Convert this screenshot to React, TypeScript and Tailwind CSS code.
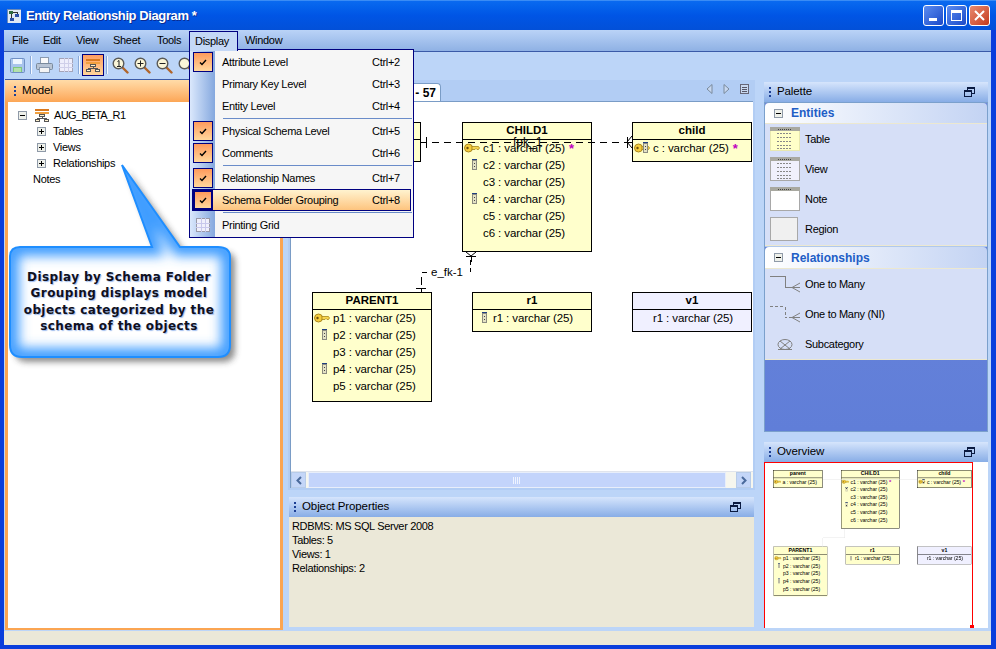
import React from "react";

const Grip = () => (
  <div className="flex flex-col gap-[2px] w-[3px] mr-[5px]">
    <div className="w-[2px] h-[2px] bg-[#1c3f94]" />
    <div className="w-[2px] h-[2px] bg-[#1c3f94]" />
    <div className="w-[2px] h-[2px] bg-[#1c3f94]" />
  </div>
);

const Restore = () => (
  <svg width="11" height="10" viewBox="0 0 11 10" className="shrink-0" shapeRendering="crispEdges">
    <path d="M3.5 3V.5h7v6H8" fill="none" stroke="#0a1a40" />
    <rect x="0.5" y="3.5" width="7" height="6" fill="none" stroke="#0a1a40" />
    <line x1="1" y1="4.5" x2="7" y2="4.5" stroke="#0a1a40" />
    <line x1="4" y1="1.5" x2="10" y2="1.5" stroke="#0a1a40" />
  </svg>
);

const PanelHeader = ({ title }: { title: string }) => (
  <div className="h-[20px] flex items-center pl-[5px] pr-[13px] pb-[1px] bg-gradient-to-b from-[#d6e5fc] to-[#88ade6] text-[11.5px] tracking-[-0.1px] text-black shrink-0">
    <Grip />
    <span className="flex-1">{title}</span>
    <Restore />
  </div>
);

const Key = ({ className = "" }: { className?: string }) => (
  <svg width="16" height="10" viewBox="0 0 16 10" className={className}>
    <ellipse cx="4.5" cy="5" rx="4" ry="4" fill="#f5cc3c" stroke="#a8861c" />
    <circle cx="3.5" cy="5" r="1.2" fill="#6e5210" />
    <path d="M8 3.5h6.5l1 1.5-1 1.5H13l-1-1-1 1H8z" fill="#f7d64e" stroke="#a8861c" strokeWidth="0.8" />
  </svg>
);

const ColIcon = ({ className = "" }: { className?: string }) => (
  <svg width="5" height="11" viewBox="0 0 5 11" className={className} shapeRendering="crispEdges">
    <rect x="0" y="0" width="5" height="2" fill="#1f3f7f" />
    <rect x="0.5" y="1.5" width="4" height="9" fill="#e4e2c4" stroke="#8a8a80" />
    <rect x="2" y="3.5" width="1" height="1" fill="#444" />
    <rect x="2" y="7" width="1" height="1" fill="#444" />
  </svg>
);

type Row = { t: string; icon?: "key" | "col" | "both"; star?: boolean };

const Entity = ({ name, x, y, w, rows, h, view }: { name: string; x: number; y: number; w: number; h: number; rows: Row[]; view?: boolean }) => (
  <div
    className={`absolute border border-black text-black ${view ? "bg-[#f0f0ff]" : "bg-[#ffffcc]"}`}
    style={{ left: x, top: y, width: w, height: h }}
  >
    <div className="h-[17px] border-b border-black flex items-center justify-center font-bold text-[11.5px] tracking-normal leading-none">{name}</div>
    {rows.map((r) => (
      <div key={r.t} className="relative h-[17px] pl-[20px] flex items-center text-[11.5px] tracking-[-0.1px] leading-none whitespace-nowrap">
        {(r.icon === "key" || r.icon === "both") && <Key className="absolute left-[1px] top-[3px]" />}
        {(r.icon === "col" || r.icon === "both") && <ColIcon className={`absolute top-[2px] ${r.icon === "both" ? "left-[10px]" : "left-[9px]"}`} />}
        <span>{r.t}</span>
        {r.star && <span className="ml-[4px] text-[#c000c0] text-[13px] font-bold leading-none">*</span>}
      </div>
    ))}
  </div>
);

const Diagram = ({ mini }: { mini?: boolean }) => (
  <>
    <svg width="460" height="180" className="absolute left-0 top-0 z-10" fill="none" stroke={mini ? "#e4e4e4" : "#000"} shapeRendering="crispEdges">
      {mini ? (
        <>
          <path d="M110 20H321" />
          <path d="M159 130V150H110V170" />
        </>
      ) : (
        <>
          <path d="M110 20H115" />
          <path d="M115 15V26" />
          <path d="M121 20H316" strokeDasharray="7 5" />
          <path d="M316 15V26" />
          <path d="M316 20H321" />
          <path d="M321 14L316 20L321 26" shapeRendering="auto" />
          <path d="M155 130L160 134L165 130" shapeRendering="auto" />
          <path d="M155 134H165" />
          <path d="M160 134V140" />
          <path d="M159 138V150" strokeDasharray="5 3" />
          <path d="M111 150H116" />
          <path d="M110 155V163" />
          <path d="M105 166H115" />
          <path d="M110 166V170" />
        </>
      )}
    </svg>
    {!mini && (
      <>
        <span className="absolute z-10 left-[202px] top-[13px] text-[12px] tracking-normal leading-[14px] text-black">fpk_1</span>
        <span className="absolute z-10 left-[120px] top-[143px] text-[11.5px] tracking-normal leading-[14px] text-black whitespace-nowrap">e_fk-1</span>
      </>
    )}
    <Entity name="parent" x={0} y={0} w={110} h={40} rows={[{ t: "a : varchar (25)", icon: "key" }]} />
    <Entity
      name="CHILD1"
      x={151}
      y={0}
      w={130}
      h={130}
      rows={[
        { t: "c1 : varchar (25)", icon: "key", star: true },
        { t: "c2 : varchar (25)", icon: "col" },
        { t: "c3 : varchar (25)" },
        { t: "c4 : varchar (25)", icon: "col" },
        { t: "c5 : varchar (25)" },
        { t: "c6 : varchar (25)" },
      ]}
    />
    <Entity name="child" x={321} y={0} w={120} h={40} rows={[{ t: "c : varchar (25)", icon: "both", star: true }]} />
    <Entity
      name="PARENT1"
      x={1}
      y={170}
      w={120}
      h={110}
      rows={[
        { t: "p1 : varchar (25)", icon: "key" },
        { t: "p2 : varchar (25)", icon: "col" },
        { t: "p3 : varchar (25)" },
        { t: "p4 : varchar (25)", icon: "col" },
        { t: "p5 : varchar (25)" },
      ]}
    />
    <Entity name="r1" x={161} y={170} w={120} h={40} rows={[{ t: "r1 : varchar (25)", icon: "col" }]} />
    <Entity name="v1" x={321} y={170} w={120} h={40} view rows={[{ t: "r1 : varchar (25)" }]} />
  </>
);

const Lens = ({ mark }: { mark: "1" | "+" | "-" | "" }) => (
  <svg width="17" height="17" viewBox="0 0 17 17" className="shrink-0">
    <path d="M10 10l5.5 5.5" stroke="#b0652a" strokeWidth="2.4" strokeLinecap="round" />
    <circle cx="6.5" cy="6.5" r="5.3" fill="#fbf6d8" stroke="#5a5a58" strokeWidth="1.4" />
    {mark === "1" && <path d="M5.5 4.5l1.5-1v6M5 9.5h4" stroke="#222" fill="none" />}
    {mark === "+" && <path d="M3.5 6.5h6M6.5 3.5v6" stroke="#222" />}
    {mark === "-" && <path d="M3.5 6.5h6" stroke="#222" />}
  </svg>
);

const SchemaIcon = () => (
  <svg width="14" height="13" viewBox="0 0 14 13" className="shrink-0" shapeRendering="crispEdges">
    <rect x="0" y="0" width="14" height="2" fill="#d9791f" />
    <rect x="0" y="3" width="14" height="2" fill="#f0a040" />
    <rect x="4.5" y="5.5" width="5" height="2" fill="#fff2d0" stroke="#555" />
    <rect x="0.5" y="10.5" width="4" height="2" fill="#fff2d0" stroke="#555" />
    <rect x="9.5" y="10.5" width="4" height="2" fill="#fff2d0" stroke="#555" />
    <path d="M7.5 8v1.5M2.5 10V9.5h9V10" stroke="#555" fill="none" />
  </svg>
);

const ToolSep = ({ className = "" }: { className?: string }) => (
  <div className={`w-[2px] h-[18px] bg-[#f4f8ff] border-l border-[#88a8d8] shrink-0 ${className}`} />
);

const Expander = ({ minus }: { minus?: boolean }) => (
  <svg width="9" height="9" viewBox="0 0 9 9" className="shrink-0" shapeRendering="crispEdges">
    <rect x="0.5" y="0.5" width="8" height="8" fill="#eef0ea" stroke="#8f9aa8" />
    <path d={minus ? "M2 4.5h5" : "M2 4.5h5M4.5 2v5"} stroke="#000" />
  </svg>
);

const Check = ({ active }: { active?: boolean }) => (
  <div
    className={`w-[20px] h-[20px] flex items-center justify-center bg-gradient-to-b from-[#fe9a5c] to-[#ffd79c] shrink-0 ${
      active ? "border-2 border-[#000080]" : "border border-[#000080]"
    }`}
  >
    <svg width="8" height="7" viewBox="0 0 8 7">
      <path d="M1 3.5l2 2 4-4.5" fill="none" stroke="#000" strokeWidth="1.4" />
    </svg>
  </div>
);

type MI = { l: string; k: string; c?: boolean; hi?: boolean; grid?: boolean; sep?: boolean };

const menuItems: MI[] = [
  { l: "Attribute Level", k: "Ctrl+2", c: true },
  { l: "Primary Key Level", k: "Ctrl+3" },
  { l: "Entity Level", k: "Ctrl+4" },
  { l: "Physical Schema Level", k: "Ctrl+5", c: true, sep: true },
  { l: "Comments", k: "Ctrl+6", c: true },
  { l: "Relationship Names", k: "Ctrl+7", c: true, sep: true },
  { l: "Schema Folder Grouping", k: "Ctrl+8", c: true, hi: true },
  { l: "Printing Grid", k: "", grid: true, sep: true },
];

const Menu = () => (
  <div className="absolute z-30 left-[189px] top-[49px] w-[225px] h-[189px] border border-[#000080] bg-[#f6f6f6] text-black">
    <div className="absolute left-0 top-0 bottom-0 w-[25px] bg-gradient-to-r from-[#dbe8fc] to-[#85a8de]" />
    <div className="relative flex flex-col pt-[1px]">
      {menuItems.map((m) => (
        <React.Fragment key={m.l}>
          {m.sep && <div className="ml-[33px] mr-[1px] h-[1px] bg-[#6a8cc9] my-[1px]" />}
          <div className="relative flex items-center h-[22px]">
            {m.hi && (
              <div className="absolute left-[2px] right-[2px] top-0 bottom-0 border border-[#000080] bg-gradient-to-b from-[#fff3cf] to-[#fdc47e]" />
            )}
            <div className="relative w-[32px] pl-[3px] shrink-0 flex items-center">
              {m.c && <Check active={m.hi} />}
              {m.grid && (
                <svg width="14" height="14" viewBox="0 0 14 14" className="ml-[3px]" shapeRendering="crispEdges">
                  <rect x="0.5" y="0.5" width="13" height="13" fill="#f0f0fc" stroke="#9a9aa8" />
                  <path d="M0 5h14M0 9h14M5 0v14M9 0v14" stroke="#c8c8ec" />
                </svg>
              )}
            </div>
            <span className="relative flex-1 whitespace-nowrap pt-[1px]">{m.l}</span>
            <span className="relative w-[41px] whitespace-nowrap pt-[1px]">{m.k}</span>
          </div>
        </React.Fragment>
      ))}
    </div>
  </div>
);

const CALLOUT =
  "M122 165L152 247L20 247Q10 247 10 257L10 345Q10 357 22 357L218 357Q230 357 230 345L230 257Q230 247 218 247L180 247Z";

const Callout = () => (
  <>
    <svg width="250" height="220" viewBox="0 160 250 220" className="absolute z-20 left-0 top-[160px]">
      <defs>
        <filter id="b1" x="-20%" y="-20%" width="140%" height="140%">
          <feGaussianBlur stdDeviation="6" />
        </filter>
        <filter id="b2" x="-20%" y="-20%" width="140%" height="140%">
          <feGaussianBlur stdDeviation="3" />
        </filter>
        <clipPath id="cp">
          <path d={CALLOUT} />
        </clipPath>
      </defs>
      <path d={CALLOUT} fill="#333" opacity="0.55" transform="translate(5 5)" filter="url(#b2)" />
      <path d={CALLOUT} fill="#fff" />
      <g clipPath="url(#cp)">
        <path d={CALLOUT} fill="none" stroke="#3f9dff" strokeWidth="18" filter="url(#b1)" />
      </g>
      <path d={CALLOUT} fill="none" stroke="#1f8eff" strokeWidth="2" />
    </svg>
    <div className="absolute z-20 left-[9px] top-[269px] w-[220px] text-center font-['DejaVu_Sans',sans-serif] font-bold text-[12px] tracking-[0.4px] leading-[16.3px] text-[#101020] [text-shadow:1px_1px_1px_rgba(60,120,220,0.5)]">
      Display by Schema Folder
      <br />
      Grouping displays model
      <br />
      objects categorized by the
      <br />
      schema of the objects
    </div>
  </>
);

const Thumb = ({ kind }: { kind: "table" | "view" | "note" | "region" }) => {
  if (kind === "region")
    return <div className="w-[28px] h-[24px] border border-[#a8a8a8] bg-[#f0f0f0]" />;
  const bg = kind === "table" ? "#ffffc8" : kind === "view" ? "#f0f0fc" : "#ffffff";
  return (
    <svg width="30" height="24" viewBox="0 0 30 24" shapeRendering="crispEdges">
      <rect x="0.5" y="0.5" width="29" height="23" fill={bg} stroke={kind === "table" ? "#e8e8b0" : "#a8a8a8"} />
      <rect x="0" y="0" width="30" height="4" fill="#a8a8a0" />
      <path d="M8 2h14" stroke="#444" strokeDasharray="1 1" />
      {kind !== "note" &&
        [6, 10, 14, 18, 21].map((y) => (
          <path key={y} d={`M7 ${y + 0.5}h14`} stroke="#888" strokeDasharray="2 1" />
        ))}
    </svg>
  );
};

const SectionHead = ({ t, short }: { t: string; short?: boolean }) => (
  <div className={`${short ? "h-[21px]" : "h-[22px]"} flex items-center pl-[9px] rounded-t-[4px] bg-gradient-to-r from-[#ffffff] to-[#c3d3f3] border-b border-[#ece8d0]`}>
    <Expander minus />
    <span className="ml-[8px] font-bold text-[12px] tracking-normal text-[#215dc6]">{t}</span>
  </div>
);

const PItem = ({ icon, t }: { icon: React.ReactNode; t: string }) => (
  <div className="h-[30px] flex items-center text-black">
    <div className="w-[40px] pl-[5px] flex items-center shrink-0">{icon}</div>
    <span>{t}</span>
  </div>
);

const RelIcon = ({ dash }: { dash?: boolean }) => (
  <svg width="30" height="17" viewBox="0 0 30 17" fill="none" stroke="#808080" shapeRendering="crispEdges">
    <path d="M0 0.5H15V11.5H24" strokeDasharray={dash ? "3 2" : undefined} />
    <path d="M22 11.5L30 7M22 11.5H30M22 11.5L30 16" shapeRendering="auto" />
  </svg>
);

const SubIcon = () => (
  <svg width="30" height="11" viewBox="0 0 30 11" fill="none" stroke="#808080">
    <ellipse cx="15" cy="5.5" rx="7" ry="5" />
    <path d="M8 10.5h14" />
    <path d="M10 2l10 8M20 2L10 10" />
  </svg>
);

export default function App() {
  return (
    <div className="relative w-[996px] h-[649px] overflow-hidden flex flex-col bg-[#0a3edc] font-['Liberation_Sans',sans-serif] text-[11px] tracking-[-0.3px]">
      {/* Title bar */}
      <div className="h-[30px] shrink-0 flex items-center pl-[7px] pr-[6px] bg-gradient-to-b from-[#0a6af0] via-[#0055e5] to-[#0250d8] border-t border-[#3a8cf5]">
        <svg width="14" height="14" viewBox="0 0 14 14" className="shrink-0" shapeRendering="crispEdges">
          <rect width="14" height="14" fill="#dfe8f5" stroke="#6a8ab8" />
          <rect x="2" y="2" width="4" height="3" fill="#2d6a3e" />
          <rect x="8" y="5" width="4" height="3" fill="#2a4ea8" />
          <rect x="3" y="9" width="4" height="3" fill="#2a4ea8" />
          <path d="M4 5v4M6 3.5h4V5" stroke="#333" fill="none" />
        </svg>
        <span className="ml-[5px] flex-1 font-bold text-[13px] tracking-[-0.4px] text-white whitespace-nowrap [text-shadow:1px_1px_0_#0a2a90]">
          Entity Relationship Diagram *
        </span>
        <div className="flex gap-[2px]">
          <div className="w-[21px] h-[21px] rounded-[3px] border border-white bg-gradient-to-br from-[#5c8cf0] to-[#1c48c8] flex items-end pl-[5px] pb-[4px]">
            <div className="w-[8px] h-[3px] bg-white" />
          </div>
          <div className="w-[21px] h-[21px] rounded-[3px] border border-white bg-gradient-to-br from-[#5c8cf0] to-[#1c48c8] flex items-center justify-center">
            <div className="w-[11px] h-[11px] border border-white border-t-[3px]" />
          </div>
          <div className="w-[21px] h-[21px] rounded-[3px] border border-white bg-gradient-to-br from-[#e88a70] to-[#c43818] flex items-center justify-center">
            <svg width="11" height="11" viewBox="0 0 11 11">
              <path d="M1 1l9 9M10 1l-9 9" stroke="#fff" strokeWidth="2" />
            </svg>
          </div>
        </div>
      </div>

      <div className="flex-1 ml-[4px] mr-[5px] mb-[4px] flex flex-col bg-[#bcd5f8] min-h-0">
        {/* Menu bar */}
        <div className="h-[22px] shrink-0 flex items-start bg-gradient-to-b from-[#bad3f7] to-[#8fb1e4] border-b border-[#3a5aa8] text-black leading-[19px]">
          <div className="w-[32px] pl-[8px] h-[21px] pt-[1px]">File</div>
          <div className="w-[33px] pl-[7px] h-[21px] pt-[1px]">Edit</div>
          <div className="w-[37px] pl-[7px] h-[21px] pt-[1px]">View</div>
          <div className="w-[44px] pl-[7px] h-[21px] pt-[1px]">Sheet</div>
          <div className="w-[39px] pl-[7px] h-[21px] pt-[1px]">Tools</div>
          <div className="w-[49px] mt-[1px] h-[20px] pl-[5px] border border-[#000080] border-b-0 bg-[#c4d8f6] z-40 leading-[18px]">Display</div>
          <div className="pl-[7px] h-[21px] pt-[1px]">Window</div>
        </div>
        {/* Toolbar */}
        <div className="h-[26px] shrink-0 flex items-center pl-[6px] gap-[5px]">
          <svg width="15" height="15" viewBox="0 0 15 15" className="shrink-0">
            <rect x="0.5" y="0.5" width="14" height="14" rx="1" fill="#a8c4ec" stroke="#6f8fc4" />
            <rect x="3" y="1" width="9" height="5" fill="#eef6ff" />
            <rect x="3" y="9" width="9" height="5" fill="#7fc87a" />
            <path d="M4 11h7M4 13h7" stroke="#e8f8e0" />
          </svg>
          <ToolSep />
          <svg width="17" height="16" viewBox="0 0 17 16" className="shrink-0 -ml-[1px]">
            <rect x="4.5" y="0.5" width="8" height="6" fill="#fafafa" stroke="#8a9ab0" />
            <rect x="0.5" y="6.5" width="16" height="6" rx="1" fill="#b8c4d4" stroke="#7a8a9c" />
            <rect x="3.5" y="10.5" width="10" height="5" fill="#f4f4f4" stroke="#8a9ab0" />
          </svg>
          <svg width="14" height="14" viewBox="0 0 14 14" className="shrink-0 ml-[1px]" shapeRendering="crispEdges">
            <rect x="0.5" y="0.5" width="13" height="13" fill="#eeeefc" stroke="#a4a4b8" />
            <path d="M0 5h14M0 9h14M5 0v14M9 0v14" stroke="#cfcfea" />
          </svg>
          <ToolSep />
          <div className="w-[22px] h-[22px] shrink-0 -ml-[3px] border border-[#000080] bg-gradient-to-b from-[#fe9d60] to-[#ffd59a] flex items-center justify-center">
            <SchemaIcon />
          </div>
          <ToolSep className="-ml-[3px]" />
          <div className="flex gap-[5px] -ml-[1px]">
            <Lens mark="1" />
            <Lens mark="+" />
            <Lens mark="-" />
            <Lens mark="" />
          </div>
        </div>
        {/* Main */}
        <div className="flex-1 flex min-h-0">
          {/* Left */}
          <div className="ml-[1px] mt-[1px] w-[278px] flex flex-col border-x-[3px] border-b-[2px] border-[#fba552] bg-white shrink-0">
            <div className="-mx-[3px] h-[23px] shrink-0 flex items-center pl-[9px] border-t border-[#3a5aa8] bg-gradient-to-b from-[#ffdca8] to-[#fca655] text-[11.5px] tracking-[-0.1px] text-black">
              <Grip />
              <span>Model</span>
            </div>
            <div className="pt-[5px] pl-[10px] text-black">
              <div className="h-[16px] flex items-center">
                <Expander minus />
                <div className="ml-[8px] mr-[5px]">
                  <SchemaIcon />
                </div>
                <span className="tracking-[-0.6px]">AUG_BETA_R1</span>
              </div>
              {["Tables", "Views", "Relationships"].map((t) => (
                <div key={t} className="h-[16px] flex items-center pl-[19px]">
                  <Expander />
                  <span className="ml-[7px]">{t}</span>
                </div>
              ))}
              <div className="h-[16px] flex items-center pl-[15px]">Notes</div>
            </div>
          </div>
          {/* Center */}
          <div className="ml-[5px] w-[467px] shrink-0 flex flex-col pt-[2px]">
            <div className="h-[410px] shrink-0 flex flex-col bg-[#b2cdf4]">
              <div className="h-[21px] shrink-0 flex items-end relative">
                <div className="ml-[120px] w-[33px] h-[18px] bg-white rounded-tr-[4px] border-t border-r border-[#7a9cc6] flex items-center justify-end pr-[4px] font-bold text-[12px] tracking-normal text-black">
                  - 57
                </div>
                <div className="absolute right-[6px] top-[4px] flex items-center gap-[10px]">
                  <svg width="7" height="10" viewBox="0 0 7 10">
                    <path d="M6 .5L1 5l5 4.5z" fill="#c8d8f0" stroke="#7a8a9c" />
                  </svg>
                  <svg width="7" height="10" viewBox="0 0 7 10">
                    <path d="M1 .5L6 5 1 9.5z" fill="#c8d8f0" stroke="#7a8a9c" />
                  </svg>
                  <svg width="9" height="10" viewBox="0 0 9 10" shapeRendering="crispEdges">
                    <rect x="0.5" y="0.5" width="8" height="9" fill="#c8d8f0" stroke="#667" />
                    <path d="M2 3h5M2 5h5M2 7h5" stroke="#556" />
                  </svg>
                </div>
              </div>
              <div className="flex-1 mx-[2px] mb-[2px] flex flex-col border-l border-t border-[#7a9cc6] bg-white min-h-0">
                <div className="relative flex-1 overflow-hidden min-h-0">
                  <div className="absolute left-[20px] top-[20px]">
                    <Diagram />
                  </div>
                </div>
                <div className="h-[17px] shrink-0 flex items-stretch bg-[#f6f6ee] border-t border-[#e0e4ec]">
                  <div className="w-[15px] border border-[#b8cce8] bg-[#c4d6f8] flex items-center justify-center">
                    <svg width="6" height="9" viewBox="0 0 6 9">
                      <path d="M5 1L1.5 4.5 5 8" fill="none" stroke="#4a6a9c" strokeWidth="2" />
                    </svg>
                  </div>
                  <div className="ml-[2px] w-[418px] border border-[#e8eefa] bg-[#c3d4fb] flex items-center justify-center">
                    <svg width="8" height="7" viewBox="0 0 8 7" shapeRendering="crispEdges">
                      <path d="M.5 0v7M2.5 0v7M4.5 0v7M6.5 0v7" stroke="#eef3ff" />
                    </svg>
                  </div>
                  <div className="ml-[10px] w-[15px] border border-[#b8cce8] bg-[#c4d6f8] flex items-center justify-center">
                    <svg width="6" height="9" viewBox="0 0 6 9">
                      <path d="M1 1l3.5 3.5L1 8" fill="none" stroke="#4a6a9c" strokeWidth="2" />
                    </svg>
                  </div>
                </div>
              </div>
            </div>
            <div className="mt-[7px] mx-[1px] h-[130px] shrink-0 flex flex-col">
              <PanelHeader title="Object Properties" />
              <div className="flex-1 bg-[#ebe8d8] pl-[3px] pt-[2px] leading-[14px] tracking-[-0.35px] text-black">
                <div>RDBMS: MS SQL Server 2008</div>
                <div>Tables: 5</div>
                <div>Views: 1</div>
                <div>Relationships: 2</div>
              </div>
            </div>
          </div>
          {/* Right */}
          <div className="ml-[9px] w-[224px] shrink-0 flex flex-col pt-[4px]">
            <div className="h-[350px] shrink-0 flex flex-col">
              <PanelHeader title="Palette" />
              <div className="flex-1 flex flex-col border border-[#7ba0cc] bg-gradient-to-b from-[#6d87dc] to-[#607ed8]">
                <SectionHead t="Entities" short />
                <div className="h-[122px] bg-[#d6dff7] border-b border-[#ece8d0]">
                  <PItem icon={<Thumb kind="table" />} t="Table" />
                  <PItem icon={<Thumb kind="view" />} t="View" />
                  <PItem icon={<Thumb kind="note" />} t="Note" />
                  <PItem icon={<Thumb kind="region" />} t="Region" />
                </div>
                <div className="h-[1px] bg-[#b0c8ec]" />
                <SectionHead t="Relationships" />
                <div className="h-[91px] bg-[#d6dff7] border-b border-[#ece8d0]">
                  <PItem icon={<RelIcon />} t="One to Many" />
                  <PItem icon={<RelIcon dash />} t="One to Many (NI)" />
                  <PItem icon={<SubIcon />} t="Subcategory" />
                </div>
              </div>
            </div>
            <div className="mt-[10px] flex flex-col">
              <PanelHeader title="Overview" />
              <div className="relative h-[166px] bg-white overflow-hidden">
                <div className="absolute left-[9px] top-[8px] origin-top-left scale-[0.45]">
                  <Diagram mini />
                </div>
                <div className="absolute left-0 top-0 w-[209px] h-[170px] border border-[#ff0000]" />
                <div className="absolute left-[206px] bottom-0 w-[4px] h-[3px] bg-[#ff0000]" />
              </div>
            </div>
          </div>
        </div>
        {/* Status */}
        <div className="h-[14px] shrink-0 mt-[1px] bg-[#ebe8d8]" />
      </div>

      <Callout />
      <Menu />
    </div>
  );
}
